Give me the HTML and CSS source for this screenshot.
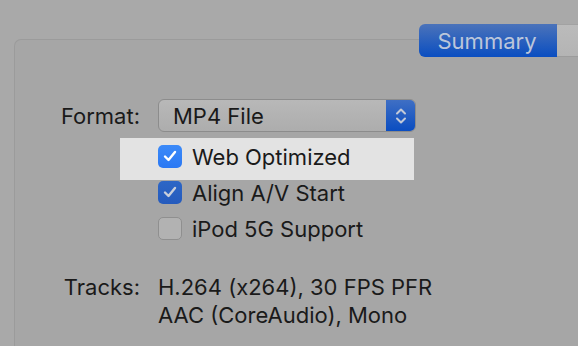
FILE: index.html
```html
<!DOCTYPE html>
<html lang="en">
  <head>
    <meta charset="UTF-8" />
    <title>Summary</title>
    <link rel="stylesheet" href="styles.css">
  </head>
  <body>
    <div class="tabs">
      <div class="tab active">Summary</div>
      <div class="tab"></div>
    </div>
    <div class="panel">
      <div class="form">
        <div class="label">Format:</div>
        <div class="select">
          <span class="select-text">MP4 File</span>
          <span class="stepper">
            <svg width="14" height="20" viewBox="0 0 14 20">
              <path d="M3 7.5 L7 3.5 L11 7.5 M3 12.5 L7 16.5 L11 12.5" fill="none" stroke="#c3cad8" stroke-width="2" stroke-linecap="round" stroke-linejoin="round"/>
            </svg>
          </span>
        </div>

        <div class="options">
          <div class="option highlight">
            <span class="check on">
              <svg width="16" height="14" viewBox="0 0 16 14"><path d="M3 7.5 L6.5 11 L13 3" fill="none" stroke="#fff" stroke-width="2.4" stroke-linecap="round" stroke-linejoin="round"/></svg>
            </span>
            Web Optimized
          </div>
          <div class="option">
            <span class="check dim">
              <svg width="16" height="14" viewBox="0 0 16 14"><path d="M3 7.5 L6.5 11 L13 3" fill="none" stroke="#c9cfdb" stroke-width="2.4" stroke-linecap="round" stroke-linejoin="round"/></svg>
            </span>
            Align A/V Start
          </div>
          <div class="option">
            <span class="check off"></span>
            iPod 5G Support
          </div>
        </div>

        <div class="label tracks-label">Tracks:</div>
        <div class="tracks">
          H.264 (x264), 30 FPS PFR<br>
          AAC (CoreAudio), Mono
        </div>
      </div>
    </div>
  </body>
</html>
```

FILE: styles.css
```css
body {
  margin: 0;
  background-color: #a9a9a9;
  font-family: 'Inter', 'Liberation Sans', sans-serif;
  color: #1a1a1a;
  overflow: hidden;
  height: 346px;
}
.tabs {
  display: flex;
  padding-top: 24px;
  padding-left: 419px;
  position: relative;
  z-index: 1;
}
.tab {
  height: 33px;
  width: 21px;
  background: linear-gradient(#bbbbbb, #b4b4b4);
  border-top: 1px solid #a2a2a2;
  border-bottom: 1px solid #9c9c9c;
  box-sizing: border-box;
}
.tab.active {
  width: 138px;
  border: none;
  border-radius: 6px 0 0 6px;
  background: linear-gradient(#4b73ba, #0a4ec1);
  color: #bcc6da;
  font-size: 22px;
  display: flex;
  align-items: center;
  justify-content: center;
  padding-right: 2px;
}
.panel {
  margin-top: -18px;
  margin-left: 14px;
  height: 307px;
  background-color: #a6a6a6;
  border: 1px solid #9b9b9b;
  border-right: none;
  border-bottom: none;
  border-radius: 7px 0 0 0;
  box-sizing: border-box;
}
.form {
  display: grid;
  grid-template-columns: 125px 1fr;
  column-gap: 18px;
  padding-top: 59px;
  font-size: 22px;
}
.label {
  text-align: right;
  align-self: center;
}
.select {
  width: 258px;
  height: 33px;
  box-sizing: border-box;
  display: flex;
  align-items: center;
  border: 1px solid #8c8c8c;
  border-radius: 6px;
  background: linear-gradient(#b8b8b8, #adadad);
  overflow: hidden;
}
.select-text {
  flex: 1;
  padding-left: 14px;
}
.stepper {
  width: 29px;
  height: 100%;
  display: flex;
  align-items: center;
  justify-content: center;
  background: linear-gradient(#3f6fc4, #0a4dc1);
}
.options {
  grid-column: 2;
  margin-top: 7px;
}
.option {
  height: 36px;
  display: flex;
  align-items: center;
  gap: 10px;
  padding-top: 2px;
  box-sizing: border-box;
}
.option .check {
  margin-top: -2px;
}
.option.highlight {
  background-color: #e3e3e3;
  margin-left: -38px;
  padding-left: 38px;
  width: 294px;
  height: 42px;
  padding-bottom: 6px;
  margin-bottom: -6px;
  margin-top: -1px;
}
.check {
  width: 24px;
  height: 23px;
  border-radius: 5px;
  box-sizing: border-box;
  display: flex;
  align-items: center;
  justify-content: center;
}
.check.on {
  background: linear-gradient(#3c8af8, #2a78f3);
}
.check.dim {
  background: linear-gradient(#2d66c6, #255bbd);
}
.check.off {
  background-color: #b2b2b2;
  border: 1px solid #8f8f8f;
}
.tracks-label,
.tracks {
  align-self: start;
  margin-top: 27px;
  line-height: 28px;
}
```
